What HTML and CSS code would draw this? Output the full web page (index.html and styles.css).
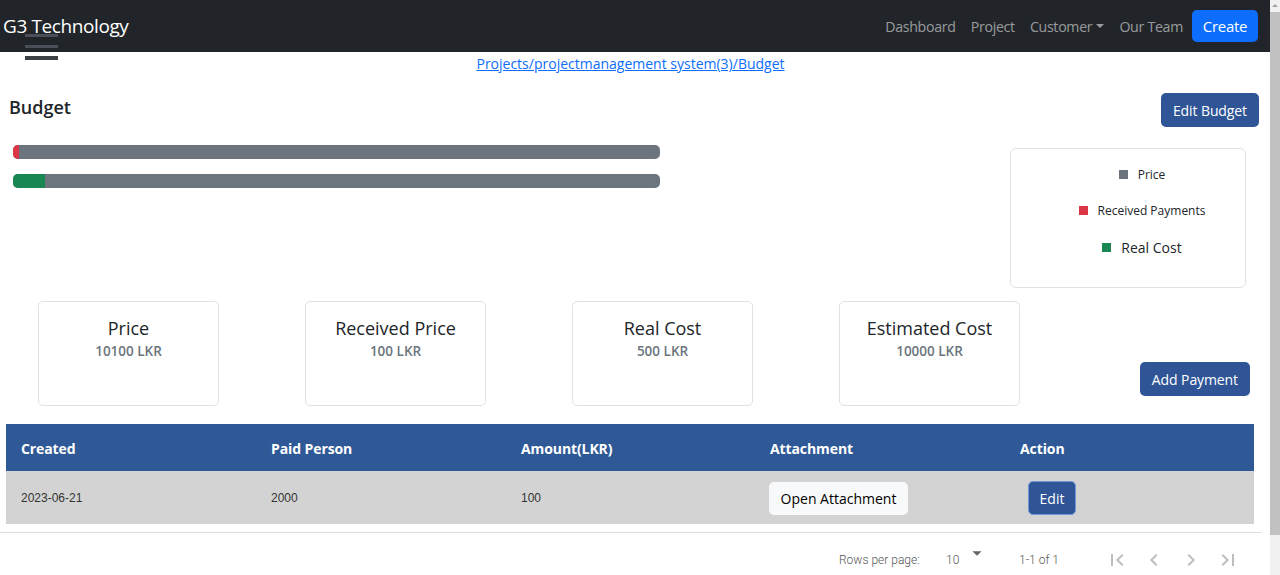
FILE: index.html
```html
<!DOCTYPE html>
<html>
<head>
<meta charset="utf-8">
<link rel="stylesheet" href="styles.css">
</head>
<body>
<div class="page">
  <nav class="navbar">
    <span class="brand">G3 Technology</span>
    <div class="nav-links">
      <a class="nav-link">Dashboard</a>
      <a class="nav-link">Project</a>
      <a class="nav-link">Customer<span class="caret"></span></a>
      <a class="nav-link">Our Team</a>
      <a class="btn-create">Create</a>
    </div>
  </nav>
  <div class="burger"><i class="b1"></i><i class="b2"></i><i class="b3"></i></div>

  <div class="crumb"><a>Projects/projectmanagement system(3)/Budget</a></div>

  <div class="head-row">
    <h2 class="title">Budget</h2>
    <button class="btn-dark">Edit Budget</button>
  </div>

  <div class="progress-row">
    <div class="bars">
      <div class="bar"><div class="fill red" style="width:1%"></div></div>
      <div class="bar"><div class="fill green" style="width:4.95%"></div></div>
    </div>
    <div class="legend">
      <div class="lg-item s13"><span class="sq gray"></span>Price</div>
      <div class="lg-item s13"><span class="sq red"></span>Received Payments</div>
      <div class="lg-item s15"><span class="sq green"></span>Real Cost</div>
    </div>
  </div>

  <div class="stats-row">
    <div class="stat"><div class="stat-title">Price</div><div class="stat-val">10100 LKR</div></div>
    <div class="stat"><div class="stat-title">Received Price</div><div class="stat-val">100 LKR</div></div>
    <div class="stat"><div class="stat-title">Real Cost</div><div class="stat-val">500 LKR</div></div>
    <div class="stat"><div class="stat-title">Estimated Cost</div><div class="stat-val">10000 LKR</div></div>
    <button class="btn-dark add">Add Payment</button>
  </div>

  <div class="table">
    <div class="thead">
      <div class="cell">Created</div>
      <div class="cell">Paid Person</div>
      <div class="cell">Amount(LKR)</div>
      <div class="cell">Attachment</div>
      <div class="cell">Action</div>
    </div>
    <div class="trow">
      <div class="cell">2023-06-21</div>
      <div class="cell">2000</div>
      <div class="cell">100</div>
      <div class="cell"><button class="btn-light">Open Attachment</button></div>
      <div class="cell"><button class="btn-edit">Edit</button></div>
    </div>
  </div>
  <div class="divider"></div>

  <div class="pager">
    <span class="rpp">Rows per page:</span>
    <span class="sel">10<svg class="dd" viewBox="0 0 24 24"><path d="M7 10l5 5 5-5z"/></svg></span>
    <span class="count">1-1 of 1</span>
    <div class="pg-icons">
      <svg viewBox="0 0 24 24"><path d="M18.41 16.59L13.82 12l4.59-4.59L17 6l-6 6 6 6zM6 6h2v12H6z"/></svg>
      <svg viewBox="0 0 24 24"><path d="M15.41 7.41L14 6l-6 6 6 6 1.41-1.41L10.83 12z"/></svg>
      <svg viewBox="0 0 24 24"><path d="M10 6L8.59 7.41 13.17 12l-4.58 4.59L10 18l6-6z"/></svg>
      <svg viewBox="0 0 24 24"><path d="M5.59 7.41L10.18 12l-4.59 4.59L7 18l6-6-6-6zM16 6h2v12h-2z"/></svg>
    </div>
  </div>
</div>
<div class="scrollbar">
  <div class="sb-arrow"></div>
  <div class="sb-thumb"></div>
</div>
</body>
</html>
```

FILE: styles.css
```css
* { box-sizing: border-box; }
html, body { margin: 0; padding: 0; overflow: hidden; }
body {
  display: flex;
  width: 1280px;
  height: 575px;
  font-family: "Open Sans", "Noto Sans", sans-serif;
  color: #212529;
  background: #fff;
}
.page { width: 1270px; position: relative; }

.navbar {
  height: 52px;
  background: #212529;
  display: flex;
  align-items: center;
  justify-content: space-between;
  padding: 0 12px 0 3px;
}
.brand { color: #fff; font-size: 19px; letter-spacing: -0.4px; }
.nav-links { display: flex; align-items: center; }
.nav-link {
  color: rgba(255,255,255,0.55);
  font-size: 14.2px;
  letter-spacing: -0.3px;
  margin-right: 15px;
  display: flex;
  align-items: center;
}
.caret {
  display: inline-block;
  margin-left: 4px;
  border-left: 4px solid transparent;
  border-right: 4px solid transparent;
  border-top: 4px solid rgba(255,255,255,0.55);
}
.btn-create {
  background: #0d6efd;
  color: #fff;
  font-size: 15px;
  letter-spacing: -0.3px;
  border-radius: 5px;
  height: 32px;
  width: 66px;
  display: flex;
  align-items: center;
  justify-content: center;
  margin-left: -6px;
}

.burger { position: absolute; left: 25px; top: 34px; width: 33px; }
.burger i { display: block; height: 3px; margin-bottom: 8px; }
.burger .b1 { background: #4a4f57; }
.burger .b2 { background: #4a4f57; }
.burger .b3 { background: #3c4148; height: 4px; margin-top: 1px; }

.crumb { text-align: center; line-height: 22px; height: 23px; padding-top: 1px; font-size: 14px; padding-right: 9px; }
.crumb a { color: #0d6efd; text-decoration: underline; }

.head-row {
  display: flex;
  justify-content: space-between;
  align-items: flex-start;
  margin-top: 18px;
  padding: 0 11px 0 9px;
}
.title { margin: 2px 0 0; font-size: 18px; font-weight: 600; line-height: 24px; }
.btn-dark {
  background: #2f5597;
  color: #fff;
  border: none;
  border-radius: 5px;
  height: 34px;
  padding: 0 12px;
  font-family: inherit;
  font-size: 14px;
  letter-spacing: -0.1px;
}

.progress-row {
  display: flex;
  justify-content: space-between;
  align-items: flex-start;
  padding: 0 24px 0 13px;
  margin-top: 18px;
}
.bars { width: 647px; }
.bar {
  height: 14px;
  background: #6c757d;
  border-radius: 5px;
  overflow: hidden;
  margin-bottom: 15px;
}
.fill { height: 100%; }
.red { background: #dc3545; }
.green { background: #198754; }
.gray { background: #6c757d; }
.legend {
  margin-top: 3px;
  width: 236px;
  height: 140px;
  border: 1px solid #dee2e6;
  border-radius: 6px;
  padding: 14px 0 0 28px;
  display: flex;
  flex-direction: column;
  align-items: center;
}
.lg-item { display: flex; align-items: center; height: 22px; margin-bottom: 14.5px; }
.s13 { font-size: 12px; }
.s15 { font-size: 14px; }
.sq { width: 9px; height: 9px; margin-right: 10px; }

.stats-row {
  display: flex;
  align-items: flex-end;
  margin-top: 13px;
  padding: 0 20px 0 38px;
}
.stat {
  width: 181px;
  height: 105px;
  border: 1px solid #dee2e6;
  border-radius: 5px;
  margin-right: 86px;
  text-align: center;
  padding-top: 14px;
}
.stat:nth-child(4) { margin-right: 0; }
.stat-title { font-size: 18px; line-height: 24px; }
.stat-val { font-size: 13.5px; font-weight: 600; color: #6c757d; line-height: 22px; }
.btn-dark.add { margin-left: auto; margin-bottom: 10px; }

.table { margin: 18px 16px 0 6px; }
.thead, .trow { display: grid; grid-template-columns: 250px 250px 249px 250px 1fr; }
.thead { background: #2f5896; height: 47px; align-items: center; }
.thead .cell { color: #fff; font-weight: 700; font-size: 14px; padding: 2px 0 0 15px; letter-spacing: -0.1px; }
.trow { background: #d3d3d3; height: 53px; align-items: center; }
.trow .cell { font-family: "Liberation Sans", Arial, sans-serif; font-size: 12px; color: #333; padding: 1px 0 0 15px; }
.trow .cell:nth-child(4) { padding-left: 14px; }
.trow .cell:nth-child(5) { padding-left: 23px; }
.btn-light {
  background: #f8f9fa;
  border: none;
  border-radius: 5px;
  height: 33px;
  width: 139px;
  font-family: "Open Sans", sans-serif;
  font-size: 14px;
  color: #000;
}
.btn-edit {
  background: #2f5597;
  color: #fff;
  border: 1px solid #6d97d6;
  border-radius: 5px;
  height: 34px;
  width: 48px;
  font-family: "Open Sans", sans-serif;
  font-size: 14px;
}
.divider { height: 1px; background: #e0e0e0; margin: 8px 8px 0 0; }

.pager {
  display: flex;
  align-items: center;
  height: 54px;
  padding-left: 839px;
  font-family: Roboto, sans-serif;
  font-size: 12px;
  font-weight: 300;
  color: #555;
}
.rpp { width: 107px; }
.sel { display: flex; align-items: flex-start; width: 73px; }
.dd { width: 22px; height: 22px; fill: #666; margin: -11px 0 0 7px; }
.count { width: 86px; }
.pg-icons { display: flex; gap: 13px; }
.pg-icons svg { width: 24px; height: 24px; fill: rgba(0,0,0,0.26); }

.scrollbar { width: 10px; height: 575px; background: #f1f1f1; display: flex; flex-direction: column; }
.sb-arrow { height: 12px; position: relative; }
.sb-arrow::after {
  content: "";
  position: absolute;
  left: 2px; top: 4px;
  border-left: 3px solid transparent;
  border-right: 3px solid transparent;
  border-bottom: 3px solid #a3a3a3;
}
.sb-thumb { height: 523px; background: #c1c1c1; }
```
